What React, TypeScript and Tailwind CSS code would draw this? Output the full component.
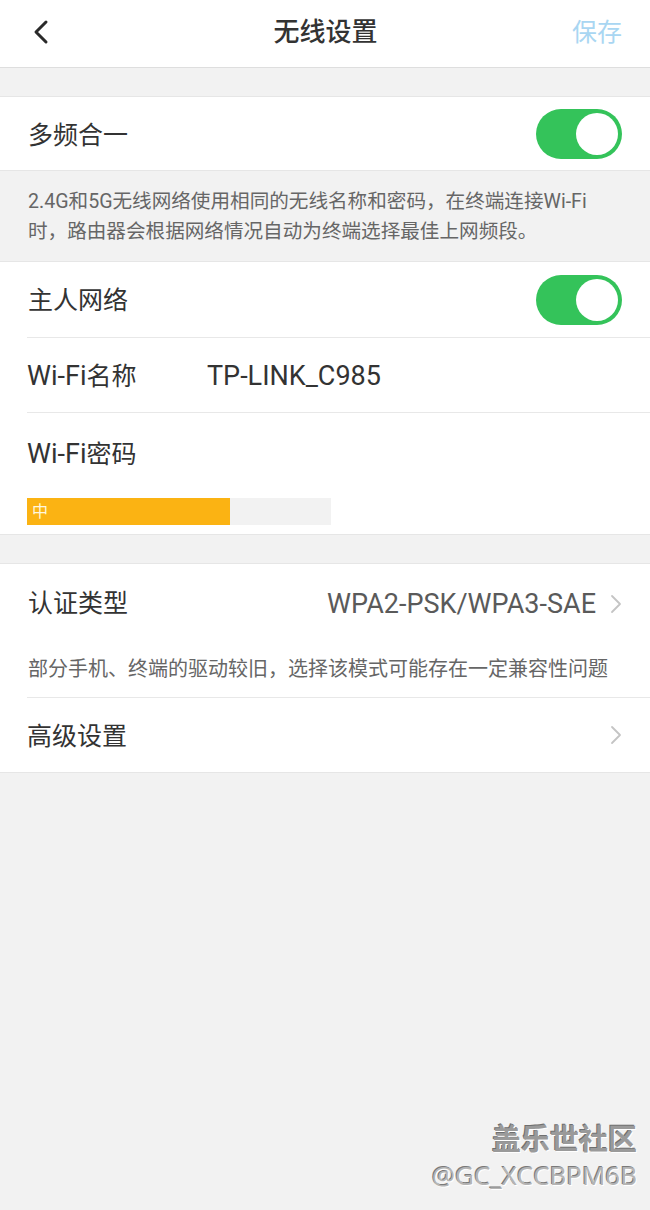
import React from "react";

const font = { fontFamily: 'Roboto, "Noto Sans CJK SC", sans-serif' };

function Toggle() {
  return (
    <div className="w-[86px] h-[50px] rounded-full bg-[#34c35a] flex items-center justify-end pr-[4px]">
      <div className="w-[42px] h-[42px] rounded-full bg-white" />
    </div>
  );
}

function Chevron() {
  return (
    <svg width="12" height="20" viewBox="0 0 12 20" className="ml-[14px]">
      <path d="M2 2 L10 10 L2 18" fill="none" stroke="#c4c4c4" strokeWidth="1.8" strokeLinecap="round" strokeLinejoin="round" />
    </svg>
  );
}

export default function App() {
  return (
    <div className="relative min-h-[1210px] w-[650px] bg-[#f2f2f2] text-[#333]" style={font}>
      {/* Header */}
      <div className="h-[68px] bg-white border-b border-[#dedede] flex items-center justify-between px-[28px]">
        <svg width="20" height="26" viewBox="0 0 20 26" className="ml-[3px] -mt-[4px]">
          <path d="M15 3 L5 13 L15 23" fill="none" stroke="#2a2a2a" strokeWidth="3" strokeLinecap="round" strokeLinejoin="round" />
        </svg>
        <div className="text-[26px] font-medium text-[#333] ml-[28px] -mt-[2px]">无线设置</div>
        <div className="text-[25px] text-[#a9d6f2] -mt-[2px]">保存</div>
      </div>

      <div className="h-[28px]" />

      {/* Section 1 */}
      <div className="bg-white border-t border-[#e6e6e6] border-b h-[75px] flex items-center justify-between px-[28px]">
        <div className="text-[25px] mt-[4px]">多频合一</div>
        <Toggle />
      </div>
      <div className="px-[28px] pt-[16px] pb-[14px] text-[19.6px] leading-[30px] text-[#666]">
        2.4G和5G无线网络使用相同的无线名称和密码，在终端连接Wi-Fi时，路由器会根据网络情况自动为终端选择最佳上网频段。
      </div>

      {/* Section 2 */}
      <div className="bg-white border-t border-b border-[#e6e6e6]">
        <div className="h-[75px] flex items-center justify-between px-[28px]">
          <div className="text-[25px] mt-[3px]">主人网络</div>
          <Toggle />
        </div>
        <div className="ml-[27px] border-t border-[#e8e8e8] h-[75px] flex items-center">
          <div className="text-[25px] w-[180px] mt-[3px]"><span className="text-[27px]">Wi-Fi</span>名称</div>
          <div className="text-[27px] text-[#333] mt-[3px]">TP-LINK_C985</div>
        </div>
        <div className="ml-[27px] border-t border-[#e8e8e8] pt-[24px] pb-[9px]">
          <div className="text-[25px] leading-[34px]"><span className="text-[27px]">Wi-Fi</span>密码</div>
          <div className="mt-[26px] w-[304px] h-[27px] bg-[#f2f2f2] flex">
            <div className="w-[203px] h-full bg-[#fbb313] flex items-center pl-[5px] text-[16px] text-[#fff7df]">中</div>
          </div>
        </div>
      </div>

      <div className="h-[28px]" />

      {/* Section 3 */}
      <div className="bg-white border-t border-b border-[#e6e6e6]">
        <div className="h-[80px] flex items-center justify-between px-[28px]">
          <div className="text-[25px]">认证类型</div>
          <div className="flex items-center">
            <div className="text-[27px] text-[#5a5a5a]">WPA2-PSK/WPA3-SAE</div>
            <Chevron />
          </div>
        </div>
        <div className="px-[28px] pt-[10px] pb-[13px] text-[20px] leading-[30px] text-[#666]">
          部分手机、终端的驱动较旧，选择该模式可能存在一定兼容性问题
        </div>
        <div className="ml-[27px] border-t border-[#e8e8e8] h-[75px] flex items-center justify-between pr-[28px]">
          <div className="text-[25px] mt-[3px]">高级设置</div>
          <Chevron />
        </div>
      </div>

      {/* Watermark */}
      <div className="absolute right-[13px] bottom-[15px] flex flex-col items-end" style={{ fontFamily: '"Open Sans", "Noto Sans CJK SC", sans-serif' }}>
        <div className="text-[29px] font-bold text-[#9a9a9a] leading-[36px] [text-shadow:1px_1px_0_#ffffff,-1px_-1px_0_#6f6f6f]" style={{ fontFamily: '"Noto Sans CJK SC", sans-serif' }}>盖乐世社区</div>
        <div className="text-[26px] text-[#b4b4b4] leading-[40px] [text-shadow:1px_1px_0_#ffffff,-1px_-1px_0_#7a7a7a]">@GC_XCCBPM6B</div>
      </div>
    </div>
  );
}
